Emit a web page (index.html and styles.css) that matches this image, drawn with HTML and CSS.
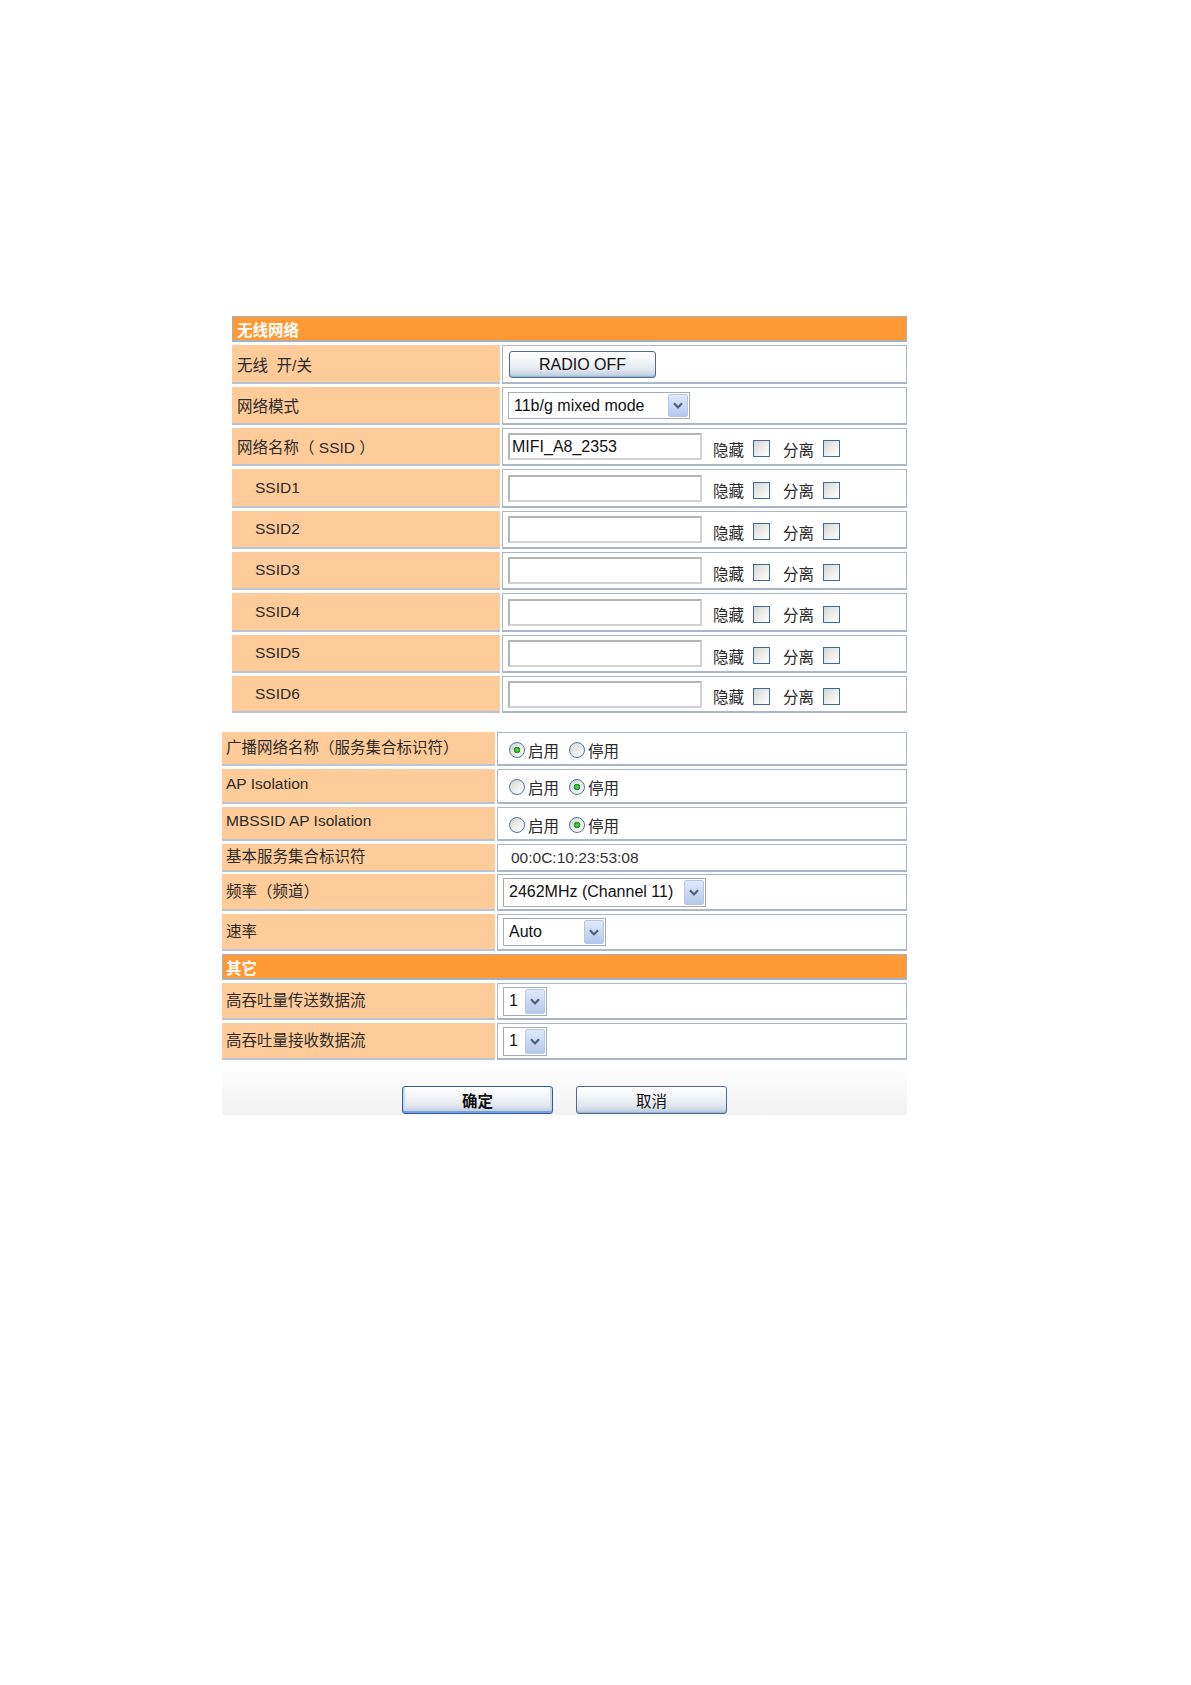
FILE: index.html
```html
<!DOCTYPE html>
<html lang="zh-CN">
<head>
<meta charset="utf-8">
<title>无线网络</title>
<link rel="stylesheet" href="styles.css">
</head>
<body>
<main class="page">
  <section class="tbl tbl-main">
    <div class="hdr">无线网络</div>
    <div class="row h39">
      <div class="lbl">无线&nbsp; 开/关</div>
      <div class="val"><button class="xpbtn btn-radio" type="button">RADIO OFF</button></div>
    </div>
    <div class="row h38">
      <div class="lbl">网络模式</div>
      <div class="val">
        <div class="sel sel-mode"><span class="sel-text">11b/g mixed mode</span><span class="sel-arrow"><svg viewBox="0 0 10 7" width="10" height="7"><path d="M1 1.2 L5 5.4 L9 1.2" fill="none" stroke="#4d6185" stroke-width="2.2"/></svg></span></div>
      </div>
    </div>
    <div class="row h38">
      <div class="lbl">网络名称（ SSID ）</div>
      <div class="val"><input class="txt" type="text" value="MIFI_A8_2353"><span class="opts"><span class="opt">隐藏</span><input class="cb" type="checkbox"><span class="opt opt2">分离</span><input class="cb" type="checkbox"></span></div>
    </div>
    <div class="row h39">
      <div class="lbl sub">SSID1</div>
      <div class="val"><input class="txt" type="text" value=""><span class="opts"><span class="opt">隐藏</span><input class="cb" type="checkbox"><span class="opt opt2">分离</span><input class="cb" type="checkbox"></span></div>
    </div>
    <div class="row h38">
      <div class="lbl sub">SSID2</div>
      <div class="val"><input class="txt" type="text" value=""><span class="opts"><span class="opt">隐藏</span><input class="cb" type="checkbox"><span class="opt opt2">分离</span><input class="cb" type="checkbox"></span></div>
    </div>
    <div class="row h38">
      <div class="lbl sub">SSID3</div>
      <div class="val"><input class="txt" type="text" value=""><span class="opts"><span class="opt">隐藏</span><input class="cb" type="checkbox"><span class="opt opt2">分离</span><input class="cb" type="checkbox"></span></div>
    </div>
    <div class="row h39">
      <div class="lbl sub">SSID4</div>
      <div class="val"><input class="txt" type="text" value=""><span class="opts"><span class="opt">隐藏</span><input class="cb" type="checkbox"><span class="opt opt2">分离</span><input class="cb" type="checkbox"></span></div>
    </div>
    <div class="row h38">
      <div class="lbl sub">SSID5</div>
      <div class="val"><input class="txt" type="text" value=""><span class="opts"><span class="opt">隐藏</span><input class="cb" type="checkbox"><span class="opt opt2">分离</span><input class="cb" type="checkbox"></span></div>
    </div>
    <div class="row h37">
      <div class="lbl sub">SSID6</div>
      <div class="val"><input class="txt" type="text" value=""><span class="opts"><span class="opt">隐藏</span><input class="cb" type="checkbox"><span class="opt opt2">分离</span><input class="cb" type="checkbox"></span></div>
    </div>
  </section>

  <section class="tbl tbl-extra">
    <div class="row h34">
      <div class="lbl">广播网络名称（服务集合标识符）</div>
      <div class="val"><span class="radios"><input class="rd" type="radio" name="bc" checked><span class="rl">启用</span><input class="rd rd2" type="radio" name="bc"><span class="rl">停用</span></span></div>
    </div>
    <div class="row h35">
      <div class="lbl">AP Isolation</div>
      <div class="val"><span class="radios"><input class="rd" type="radio" name="api"><span class="rl">启用</span><input class="rd rd2" type="radio" name="api" checked><span class="rl">停用</span></span></div>
    </div>
    <div class="row h34">
      <div class="lbl">MBSSID AP Isolation</div>
      <div class="val"><span class="radios"><input class="rd" type="radio" name="mbi"><span class="rl">启用</span><input class="rd rd2" type="radio" name="mbi" checked><span class="rl">停用</span></span></div>
    </div>
    <div class="row h27">
      <div class="lbl">基本服务集合标识符</div>
      <div class="val"><span class="mac">00:0C:10:23:53:08</span></div>
    </div>
    <div class="row h37">
      <div class="lbl">频率（频道）</div>
      <div class="val">
        <div class="sel sel-freq"><span class="sel-text">2462MHz (Channel 11)</span><span class="sel-arrow"><svg viewBox="0 0 10 7" width="10" height="7"><path d="M1 1.2 L5 5.4 L9 1.2" fill="none" stroke="#4d6185" stroke-width="2.2"/></svg></span></div>
      </div>
    </div>
    <div class="row h37">
      <div class="lbl">速率</div>
      <div class="val">
        <div class="sel sel-rate"><span class="sel-text">Auto</span><span class="sel-arrow"><svg viewBox="0 0 10 7" width="10" height="7"><path d="M1 1.2 L5 5.4 L9 1.2" fill="none" stroke="#4d6185" stroke-width="2.2"/></svg></span></div>
      </div>
    </div>
    <div class="hdr hdr2">其它</div>
    <div class="row h37">
      <div class="lbl">高吞吐量传送数据流</div>
      <div class="val">
        <div class="sel sel-num"><span class="sel-text">1</span><span class="sel-arrow"><svg viewBox="0 0 10 7" width="10" height="7"><path d="M1 1.2 L5 5.4 L9 1.2" fill="none" stroke="#4d6185" stroke-width="2.2"/></svg></span></div>
      </div>
    </div>
    <div class="row h37">
      <div class="lbl">高吞吐量接收数据流</div>
      <div class="val">
        <div class="sel sel-num"><span class="sel-text">1</span><span class="sel-arrow"><svg viewBox="0 0 10 7" width="10" height="7"><path d="M1 1.2 L5 5.4 L9 1.2" fill="none" stroke="#4d6185" stroke-width="2.2"/></svg></span></div>
      </div>
    </div>
    <div class="actions">
      <button class="xpbtn btn-act btn-ok" type="button">确定</button>
      <button class="xpbtn btn-act" type="button">取消</button>
    </div>
  </section>
</main>
</body>
</html>
```

FILE: styles.css
```css
html, body {
  margin: 0;
  padding: 0;
  background: #ffffff;
}

body {
  font-family: "Liberation Sans", "Noto Sans CJK SC", sans-serif;
  color: #2a2a2a;
  font-size: 15.5px;
}

.page {
  padding-top: 316px;
  padding-bottom: 200px;
}

.tbl {
  display: flex;
  flex-direction: column;
  gap: 3px;
}

.tbl-main {
  margin-left: 232px;
  width: 675px;
}

.tbl-extra {
  margin-left: 222px;
  width: 685px;
  margin-top: 19px;
}

.hdr {
  height: 26px;
  box-sizing: border-box;
  background: #ff9933;
  border: 1px solid #a3b2c6;
  border-bottom-width: 2px;
  color: #ffffff;
  font-weight: bold;
  font-size: 15.5px;
  display: flex;
  align-items: center;
  padding-left: 4px;
}

.hdr2 {
  padding-left: 3px;
}

.row {
  display: grid;
  grid-template-columns: 268px 405px;
  column-gap: 2px;
}

.tbl-extra .row {
  grid-template-columns: 273px 410px;
}

.h27 { height: 27px; }
.h34 { height: 34px; }
.h35 { height: 35px; }
.h37 { height: 37px; }
.h38 { height: 38px; }
.h39 { height: 39px; }

.lbl {
  background: #ffcc99;
  border-bottom: 2px solid #b9c5d6;
  box-sizing: border-box;
  display: flex;
  align-items: center;
  padding-left: 5px;
  white-space: nowrap;
  color: #2a2a2a;
}

.tbl-extra .lbl {
  padding-left: 4px;
  padding-bottom: 4px;
}

.lbl.sub {
  padding-left: 23px;
}

.val {
  background: #ffffff;
  border: 1px solid #a9b7c9;
  border-bottom-width: 2px;
  box-sizing: border-box;
  display: flex;
  align-items: center;
  padding-left: 4px;
  white-space: nowrap;
}

/* XP style buttons */
.xpbtn {
  font-family: "Liberation Sans", "Noto Sans CJK SC", sans-serif;
  font-size: 16px;
  color: #111111;
  border: 1px solid #4e6a8e;
  border-radius: 3px;
  background: linear-gradient(180deg, #ffffff 0%, #f4f5f8 35%, #e2e8f1 70%, #c4d1e4 92%, #aabcd8 100%);
  box-shadow: inset 0 -1px 0 #9fb3d3, inset 0 1px 0 #ffffff;
  padding: 0;
  margin: 0;
  cursor: default;
}

.btn-radio {
  width: 147px;
  height: 27px;
  margin-left: 2px;
  margin-top: 1px;
}

.actions {
  display: flex;
  justify-content: center;
  align-items: flex-start;
  gap: 23px;
  height: 52px;
  padding-top: 23px;
  box-sizing: border-box;
  background: linear-gradient(180deg, #ffffff 0%, #f8f8f8 50%, #f2f2f2 100%);
}

.btn-act {
  width: 151px;
  height: 28px;
  font-size: 15.5px;
}

.btn-ok {
  border-color: #2a5ea8;
  box-shadow: inset 0 -2px 0 #7f9fd6, inset 2px 0 0 #c8d6ef, inset -2px 0 0 #c8d6ef, inset 0 1px 0 #ffffff;
  font-weight: bold;
}

/* select boxes */
.sel {
  display: flex;
  align-items: stretch;
  box-sizing: border-box;
  border: 1px solid #a5acb5;
  background: #ffffff;
  height: 27px;
  padding: 1px;
}

.sel-text {
  flex: 1;
  display: flex;
  align-items: center;
  padding-left: 4px;
  font-size: 16px;
  color: #111111;
  overflow: hidden;
}

.sel-arrow {
  width: 20px;
  box-sizing: border-box;
  border: 1px solid #b6c7e3;
  border-radius: 2px;
  background: linear-gradient(180deg, #dfe9fa 0%, #c9d9f4 50%, #b3c8ec 100%);
  display: flex;
  align-items: center;
  justify-content: center;
}

.sel-mode {
  width: 182px;
  margin-left: 1px;
}

.sel-freq {
  width: 203px;
  height: 29px;
  margin-left: 1px;
}

.sel-rate {
  width: 103px;
  height: 28px;
  margin-left: 1px;
}

.sel-num {
  width: 44px;
  height: 29px;
  margin-left: 1px;
}

.sel-num .sel-text {
  padding-left: 4px;
}

/* text inputs */
.txt {
  width: 194px;
  height: 27px;
  box-sizing: border-box;
  margin: 0 0 0 1px;
  padding: 0 0 0 2px;
  border-style: solid;
  border-width: 2px;
  border-color: #b4b4b4 #d2d2d2 #d2d2d2 #b4b4b4;
  background: #ffffff;
  font-family: "Liberation Sans", sans-serif;
  font-size: 16px;
  color: #111111;
  outline: none;
}

.opts {
  display: flex;
  align-items: center;
  margin-top: 4px;
  margin-left: 11px;
}

.opt {
  color: #2a2a2a;
  font-size: 15.5px;
  margin-right: 9px;
}

.opt2 {
  margin-left: 13px;
}

.cb {
  appearance: none;
  -webkit-appearance: none;
  width: 17px;
  height: 17px;
  margin: 0;
  box-sizing: border-box;
  border: 1px solid #3f6a98;
  background: linear-gradient(135deg, #d6d6d0 0%, #ececea 50%, #ffffff 100%);
}

/* radios */
.radios {
  display: flex;
  align-items: center;
  margin-left: 7px;
  margin-top: 2px;
}

.rd {
  appearance: none;
  -webkit-appearance: none;
  width: 16px;
  height: 16px;
  margin: 0 3px 0 0;
  box-sizing: border-box;
  border: 1px solid #4b77a8;
  border-radius: 50%;
  background: linear-gradient(135deg, #d4d4ce 0%, #eeeeec 55%, #ffffff 100%);
}

.rd:checked {
  background:
    radial-gradient(circle at 50% 50%, #6fd86f 0, #2fae2f 2px, #1f8f1f 3px, rgba(31,143,31,0) 3.6px),
    linear-gradient(135deg, #d4d4ce 0%, #eeeeec 55%, #ffffff 100%);
}

.rd2 {
  margin-left: 10px;
}

.rl {
  font-size: 15.5px;
  color: #2a2a2a;
}

.mac {
  margin-left: 9px;
  font-size: 15.5px;
  color: #333333;
}
```
